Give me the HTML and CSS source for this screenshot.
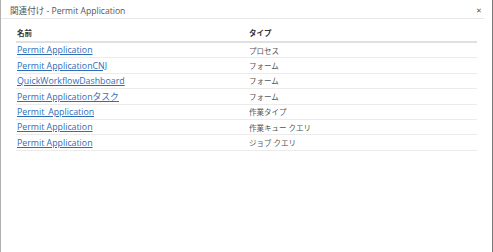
FILE: index.html
```html
<!DOCTYPE html>
<html lang="ja">
<head>
  <meta charset="UTF-8" />
  <title>関連付け - Permit Application</title>
  <link rel="stylesheet" href="styles.css">
</head>
<body>
  <div class="dialog">
    <div class="dialog-header">
      <span class="dialog-title">関連付け - Permit Application</span>
      <span class="close">&#x2715;</span>
    </div>
    <div class="dialog-body">
      <table class="assoc">
        <thead>
          <tr><th class="col-name">名前</th><th>タイプ</th></tr>
        </thead>
        <tbody>
          <tr><td><a href="#">Permit Application</a></td><td>プロセス</td></tr>
          <tr><td><a href="#">Permit ApplicationCNJ</a></td><td>フォーム</td></tr>
          <tr><td><a href="#">QuickWorkflowDashboard</a></td><td>フォーム</td></tr>
          <tr><td><a href="#">Permit Applicationタスク</a></td><td>フォーム</td></tr>
          <tr><td><a href="#">Permit_Application</a></td><td>作業タイプ</td></tr>
          <tr><td><a href="#">Permit Application</a></td><td>作業キュー クエリ</td></tr>
          <tr><td><a href="#">Permit Application</a></td><td>ジョブ クエリ</td></tr>
        </tbody>
      </table>
    </div>
  </div>
</body>
</html>
```

FILE: styles.css
```css
html, body {
  margin: 0;
  padding: 0;
  background: #fff;
}
body {
  font-family: "Open Sans", "Noto Sans CJK JP", sans-serif;
  font-size: 7.5px;
  color: #333;
}
.dialog {
  height: 252px;
  box-sizing: border-box;
  border-left: 1px solid #b0b0b0;
  border-right: 1px solid #777;
}
.dialog-header {
  display: flex;
  align-items: center;
  justify-content: space-between;
  height: 19px;
  box-sizing: border-box;
  margin-right: 8px;
  padding: 2px 2px 0 9px;
  border-bottom: 1px solid #e8e8e8;
}
.dialog-title {
  font-size: 8.6px;
  color: #555;
}
.close {
  font-size: 7px;
  color: #555;
}
.dialog-body {
  padding: 6px 15px 0 15px;
}
.assoc {
  width: 461px;
  border-collapse: collapse;
}
.assoc th {
  text-align: left;
  font-weight: bold;
  color: #333;
  padding: 2px 1px 3px;
  height: 10px;
  border-bottom: 2px solid #e0e0e0;
}
.assoc td {
  padding: 0 1px;
  height: 14.4px;
  border-bottom: 1px solid #ebebeb;
  color: #555;
}
.col-name {
  width: 230px;
}
.assoc a {
  font-size: 8.8px;
  color: #2f6db8;
  text-decoration: underline;
}
```
